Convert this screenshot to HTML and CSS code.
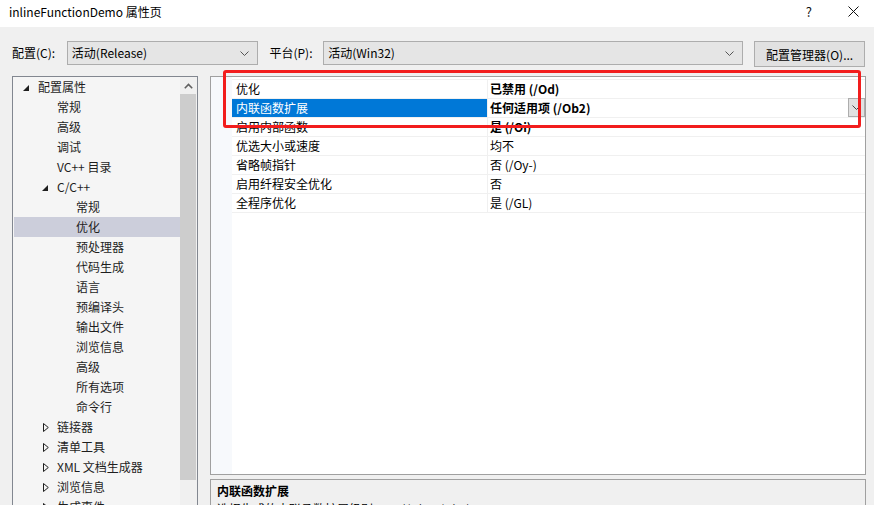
FILE: index.html
```html
<!DOCTYPE html>
<html lang="zh-CN">
<head>
  <meta charset="UTF-8">
  <title>inlineFunctionDemo 属性页</title>
  <link rel="stylesheet" href="styles.css">
</head>
<body>
  <div class="titlebar">
    <span class="title">inlineFunctionDemo 属性页</span>
    <div class="caption-btns">
      <span class="help">?</span>
      <svg class="close" width="11" height="11" viewBox="0 0 11 11"><path d="M0.5 0.5 L10.5 10.5 M10.5 0.5 L0.5 10.5" stroke="#111" stroke-width="1"/></svg>
    </div>
  </div>

  <div class="config-row">
    <label class="lbl-config">配置(C):</label>
    <div class="combo combo-config">
      <span>活动(Release)</span>
      <svg class="chev" width="9" height="5" viewBox="0 0 9 5"><path d="M0.5 0.5 L4.5 4.5 L8.5 0.5" fill="none" stroke="#555" stroke-width="1"/></svg>
    </div>
    <label class="lbl-platform">平台(P):</label>
    <div class="combo combo-platform">
      <span>活动(Win32)</span>
      <svg class="chev" width="9" height="5" viewBox="0 0 9 5"><path d="M0.5 0.5 L4.5 4.5 L8.5 0.5" fill="none" stroke="#555" stroke-width="1"/></svg>
    </div>
    <button class="btn-manager">配置管理器(O)...</button>
  </div>

  <div class="main">
    <!-- left tree -->
    <div class="tree">
      <div class="tree-list">
        <div class="node l1"><span class="exp"><svg width="6" height="6" viewBox="0 0 6 6"><polygon points="6,0 6,6 0,6" fill="#1e1e1e"/></svg></span>配置属性</div>
        <div class="node l2"><span class="exp"></span>常规</div>
        <div class="node l2"><span class="exp"></span>高级</div>
        <div class="node l2"><span class="exp"></span>调试</div>
        <div class="node l2"><span class="exp"></span>VC++ 目录</div>
        <div class="node l2"><span class="exp"><svg width="6" height="6" viewBox="0 0 6 6"><polygon points="6,0 6,6 0,6" fill="#1e1e1e"/></svg></span>C/C++</div>
        <div class="node l3"><span class="exp"></span>常规</div>
        <div class="node l3 selected"><span class="exp"></span>优化</div>
        <div class="node l3"><span class="exp"></span>预处理器</div>
        <div class="node l3"><span class="exp"></span>代码生成</div>
        <div class="node l3"><span class="exp"></span>语言</div>
        <div class="node l3"><span class="exp"></span>预编译头</div>
        <div class="node l3"><span class="exp"></span>输出文件</div>
        <div class="node l3"><span class="exp"></span>浏览信息</div>
        <div class="node l3"><span class="exp"></span>高级</div>
        <div class="node l3"><span class="exp"></span>所有选项</div>
        <div class="node l3"><span class="exp"></span>命令行</div>
        <div class="node l2"><span class="exp"><svg class="closed" width="6" height="9" viewBox="0 0 6 9"><polygon points="0.5,0.5 5.3,4.5 0.5,8.5" fill="none" stroke="#1e1e1e" stroke-width="1"/></svg></span>链接器</div>
        <div class="node l2"><span class="exp"><svg class="closed" width="6" height="9" viewBox="0 0 6 9"><polygon points="0.5,0.5 5.3,4.5 0.5,8.5" fill="none" stroke="#1e1e1e" stroke-width="1"/></svg></span>清单工具</div>
        <div class="node l2"><span class="exp"><svg class="closed" width="6" height="9" viewBox="0 0 6 9"><polygon points="0.5,0.5 5.3,4.5 0.5,8.5" fill="none" stroke="#1e1e1e" stroke-width="1"/></svg></span>XML 文档生成器</div>
        <div class="node l2"><span class="exp"><svg class="closed" width="6" height="9" viewBox="0 0 6 9"><polygon points="0.5,0.5 5.3,4.5 0.5,8.5" fill="none" stroke="#1e1e1e" stroke-width="1"/></svg></span>浏览信息</div>
        <div class="node l2"><span class="exp"><svg class="closed" width="6" height="9" viewBox="0 0 6 9"><polygon points="0.5,0.5 5.3,4.5 0.5,8.5" fill="none" stroke="#1e1e1e" stroke-width="1"/></svg></span>生成事件</div>
      </div>
      <div class="vscroll">
        <div class="arrow-up">
          <svg width="9" height="6" viewBox="0 0 9 6"><path d="M0.8 5.2 L4.5 1.5 L8.2 5.2" fill="none" stroke="#606060" stroke-width="1.6"/></svg>
        </div>
        <div class="thumb"></div>
      </div>
    </div>

    <!-- right side -->
    <div class="right">
      <div class="grid">
        <div class="margin-strip"></div>
        <div class="rows">
          <div class="prow"><div class="pname">优化</div><div class="pval bold">已禁用 (/Od)</div></div>
          <div class="prow active"><div class="pname">内联函数扩展</div><div class="pval bold">任何适用项 (/Ob2)<span class="drop"><svg width="9" height="5" viewBox="0 0 9 5"><path d="M0.5 0.5 L4.5 4.5 L8.5 0.5" fill="none" stroke="#444" stroke-width="1"/></svg></span></div></div>
          <div class="prow"><div class="pname">启用内部函数</div><div class="pval bold">是 (/Oi)</div></div>
          <div class="prow"><div class="pname">优选大小或速度</div><div class="pval">均不</div></div>
          <div class="prow"><div class="pname">省略帧指针</div><div class="pval">否 (/Oy-)</div></div>
          <div class="prow"><div class="pname">启用纤程安全优化</div><div class="pval">否</div></div>
          <div class="prow"><div class="pname">全程序优化</div><div class="pval">是 (/GL)</div></div>
        </div>
      </div>
      <div class="desc">
        <div class="desc-title">内联函数扩展</div>
        <div class="desc-text">选择生成的内联函数扩展级别。&nbsp;&nbsp;&nbsp;&nbsp;&nbsp;&nbsp;(/Ob1, /Ob2)</div>
      </div>
    </div>
  </div>

  <!-- annotation -->
  <div class="mark"></div>
</body>
</html>
```

FILE: styles.css
```css
body {
  margin: 0;
  width: 874px;
  height: 505px;
  overflow: hidden;
  position: relative;
  background: #f0f0f0;
  font-family: "Noto Sans CJK SC", sans-serif;
  font-size: 12px;
  color: #000;
}

.titlebar {
  height: 27px;
  background: #fff;
  display: flex;
  align-items: center;
  justify-content: space-between;
  padding: 0 15px 0 9px;
}

.title {
  font-size: 12px;
  line-height: 16px;
  margin-top: -4px;
}

.caption-btns {
  display: flex;
  align-items: center;
  gap: 36px;
  margin-top: -4px;
}

.help {
  font-size: 13px;
  line-height: 16px;
  color: #111;
}

.config-row {
  display: flex;
  align-items: flex-start;
  padding: 14px 9px 0 12px;
  height: 26px;
}

.config-row label {
  line-height: 24px;
}

.lbl-config {
  width: 55px;
}

.lbl-platform {
  width: 54px;
  margin-left: 11px;
}

.combo {
  box-sizing: border-box;
  height: 24px;
  border: 1px solid #adadad;
  background: #e5e5e5;
  display: flex;
  align-items: center;
  justify-content: space-between;
  padding: 0 8px 0 4px;
  line-height: 22px;
}

.combo-config {
  width: 192px;
}

.combo-platform {
  width: 421px;
}

.btn-manager {
  box-sizing: border-box;
  margin-left: 11px;
  width: 111px;
  height: 26px;
  border: 1px solid #adadad;
  background: #e1e1e1;
  font-family: inherit;
  font-size: 12px;
  padding: 0;
  color: #000;
}

.main {
  display: flex;
  gap: 12px;
  padding: 9px 8px 0 12px;
}

/* tree */
.tree {
  box-sizing: border-box;
  width: 186px;
  height: 440px;
  border: 1px solid #828790;
  background: #f5f5f5;
  display: flex;
}

.tree-list {
  flex: 1;
  padding-left: 1px;
}

.node {
  height: 20px;
  line-height: 20px;
  display: flex;
  align-items: center;
  white-space: nowrap;
  color: #1e1e1e;
}

.node.l1 { padding-left: 5px; }
.node.l2 { padding-left: 24px; }
.node.l3 { padding-left: 43px; }

.node.selected {
  background: #cccedb;
}

.exp {
  width: 19px;
  flex: none;
  display: flex;
  align-items: center;
  padding-left: 4px;
  box-sizing: border-box;
}

.exp svg {
  margin-top: 2px;
}

.exp svg.closed {
  margin-top: 0;
  margin-left: 1px;
}

.vscroll {
  width: 17px;
  background: #f0f0f0;
  display: flex;
  flex-direction: column;
}

.arrow-up {
  height: 17px;
  display: flex;
  align-items: center;
  justify-content: center;
}

.thumb {
  margin: 0 1px 0 0;
  height: 386px;
  background: #cdcdcd;
}

/* property grid */
.right {
  width: 656px;
  display: flex;
  flex-direction: column;
  gap: 4px;
}

.grid {
  box-sizing: border-box;
  height: 399px;
  border: 1px solid #a0a0a0;
  background: #fff;
  display: flex;
  padding-top: 2px;
}

.margin-strip {
  width: 21px;
  background: #f7f9fc;
  margin-top: -2px;
}

.rows {
  flex: 1;
  border-bottom: 1px solid #f0f0f0;
  align-self: flex-start;
}

.prow {
  display: flex;
  height: 18px;
  border-top: 1px solid #f0f0f0;
  line-height: 17px;
}

.pname {
  width: 251px;
  padding-left: 4px;
  border-right: 1px solid #f0f0f0;
  white-space: nowrap;
}

.pval {
  flex: 1;
  padding-left: 2px;
  display: flex;
  justify-content: space-between;
  white-space: nowrap;
}

.bold {
  font-weight: bold;
}

.prow.active .pname {
  background: #0078d7;
  color: #fff;
}

.drop {
  box-sizing: border-box;
  width: 17px;
  height: 19px;
  margin-top: -1px;
  border: 1px solid #adadad;
  background: #e1e1e1;
  display: flex;
  align-items: center;
  justify-content: center;
}

/* description */
.desc {
  box-sizing: border-box;
  height: 40px;
  border: 1px solid #a0a0a0;
  background: #f0f0f0;
  padding: 2px 6px;
}

.desc-title {
  font-weight: bold;
  line-height: 18px;
}

.desc-text {
  line-height: 18px;
}

/* red annotation box drawn over the grid */
.mark {
  position: absolute;
  left: 223px;
  top: 70px;
  width: 632px;
  height: 52px;
  border: 3px solid #f21d1d;
  border-radius: 3px;
}
```
